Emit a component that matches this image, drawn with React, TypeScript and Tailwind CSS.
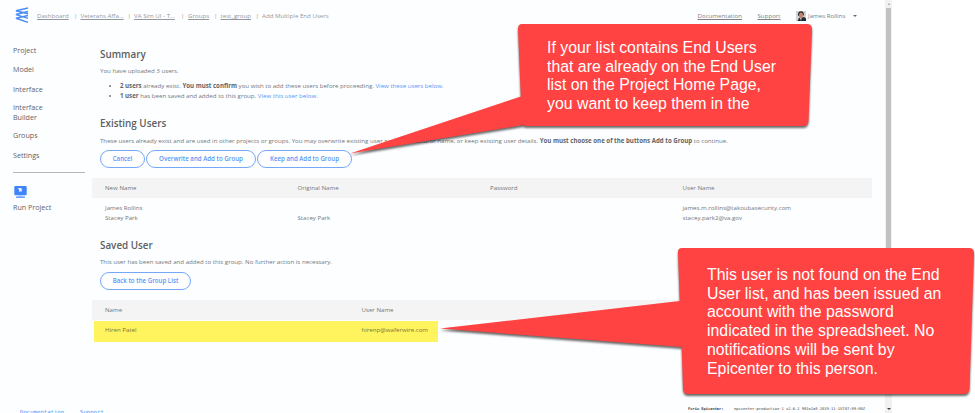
import React from "react";

const crumbs = [
  { label: "Dashboard", width: "w-[37px]", bar: "w-[6.5px]" },
  { label: "Veterans Affa...", width: "w-[47px]", bar: "w-[6.5px]" },
  { label: "VA Sim UI - T...", width: "w-[47px]", bar: "w-[7px]" },
  { label: "Groups", width: "w-[26px]", bar: "w-[6.5px]" },
  { label: "test_group", width: "w-[35px]", bar: "w-[6.5px]" },
];

function Logo() {
  return (
    <svg className="h-[17px] w-[14px] shrink-0" viewBox="0 0 14 17" fill="none" stroke="#4a8cfa" strokeWidth="1.5" strokeLinejoin="bevel">
      <path d="M13 1 1 3.7 13 6.8M13 4.6 1 7.6l12 3.8M13 8.5 1 11.2l12 4.2" />
    </svg>
  );
}

function Avatar() {
  return (
    <svg className="h-[10px] w-[10px] shrink-0" viewBox="0 0 10 10">
      <rect width="10" height="10" fill="#cfd3d6" />
      <path d="M1.5 10 3 7l5-1 2 1.5V10z" fill="#202936" />
      <path d="M2 3.2Q2.2.2 5 .2t2.8 3L7.2 5H2.4z" fill="#302522" />
      <ellipse cx="5" cy="4.5" rx="2" ry="2.9" fill="#bd8670" />
      <path d="m4.2 7 1.2.3L5 10z" fill="#f5f5f5" />
    </svg>
  );
}

function RunIcon() {
  return (
    <svg className="block h-[12px] w-[13px]" viewBox="0 0 13 12">
      <rect x="0.3" y="0" width="12.4" height="9.2" rx="1" fill="#3f85fa" />
      <rect x="4.3" y="9" width="4.4" height="1.6" fill="#b6d0fd" />
      <rect x="2" y="10.4" width="9" height="1.3" rx="0.4" fill="#3f85fa" />
      <path d="m3.7 2.3 4-.1L7.6 6 6.5 5l-.8 1-.9-1 .8-.8z" fill="#fff" />
    </svg>
  );
}

function PillButton({ children, className }: { children: React.ReactNode; className: string }) {
  return (
    <button className={`flex h-[18px] items-center justify-center rounded-full border border-[#76a8f8] bg-white text-[6.15px] font-semibold text-[#5a94f8] ${className}`}>
      {children}
    </button>
  );
}

function Header() {
  return (
    <header className="flex h-[38px] shrink-0 items-start pt-[7px] pl-[15px] text-[6.15px] leading-[10px] text-[#94979b]">
      <Logo />
      <nav className="ml-[8px] flex items-center pt-[4px]">
        {crumbs.map((c) => (
          <React.Fragment key={c.label}>
            <a className={`${c.width} underline`}>{c.label}</a>
            <span className={c.bar}>|</span>
          </React.Fragment>
        ))}
        <span>Add Multiple End Users</span>
      </nav>
      <div className="ml-auto flex items-center pt-[4px] pr-[28px] text-[#7d8084]">
        <a className="w-[60px] underline">Documentation</a>
        <a className="w-[38.5px] underline">Support</a>
        <Avatar />
        <span className="ml-[2px] w-[45px]">James Rollins</span>
        <span className="border-x-[2px] border-t-[2.5px] border-x-transparent border-t-[#666]" />
      </div>
    </header>
  );
}

function Sidebar() {
  return (
    <aside className="w-[92px] shrink-0 pl-[13px] pt-[7px] text-[7.15px] leading-[10px] text-[#5f6266]">
      <div className="h-[19px]">Project</div>
      <div className="h-[19.5px]">Model</div>
      <div className="h-[18.5px]">Interface</div>
      <div className="h-[28px]">Interface<br />Builder</div>
      <div className="h-[20px]">Groups</div>
      <div className="h-[22px]">Settings</div>
      <hr className="w-[72px] border-t border-[#b4b7bb]" />
      <div className="mt-[13px] pl-px"><RunIcon /></div>
      <div className="mt-[4px]">Run Project</div>
    </aside>
  );
}

function Main() {
  return (
    <main className="w-[780px] text-[6.14px] leading-[10px] text-[#74777b]">
      <div className="pl-[8px] pt-[9px]">
        <h2 className="h-[19px] text-[9.85px] leading-[14px] font-semibold text-[#5b5e62]">Summary</h2>
        <p>You have uploaded 3 users.</p>
        <ul className="mt-[5px] list-disc pl-[20px] marker:text-[7px]">
          <li><b className="text-[#606367]">2 users</b> already exist. <b className="text-[#606367]">You must confirm</b> you wish to add these users before proceeding. <a className="text-[#5a94f8]">View these users below.</a></li>
          <li><b className="text-[#606367]">1 user</b> has been saved and added to this group. <a className="text-[#5a94f8]">View this user below.</a></li>
        </ul>
        <h2 className="mt-[15px] h-[20px] text-[9.85px] leading-[14px] font-semibold text-[#5b5e62]">Existing Users</h2>
        <p className="whitespace-nowrap">These users already exist and are used in other projects or groups. You may overwrite existing user passwords and/or name, or keep existing user details. <b className="text-[#606367]">You must choose one of the buttons Add to Group</b> to continue.</p>
        <div className="mt-[4px] flex gap-[1px]">
          <PillButton className="w-[45px]">Cancel</PillButton>
          <PillButton className="w-[110px]">Overwrite and Add to Group</PillButton>
          <PillButton className="w-[95px]">Keep and Add to Group</PillButton>
        </div>
      </div>
      <div className="mt-[9.5px] grid h-[20px] grid-cols-[192.5px_192.5px_192.5px_1fr] items-center bg-[#f4f4f4] pl-[13px]">
        <span>New Name</span><span>Original Name</span><span>Password</span><span>User Name</span>
      </div>
      <div className="mt-[5px] grid grid-cols-[192.5px_192.5px_192.5px_1fr] pl-[13px]">
        <span>James Rollins</span><span /><span /><span>james.m.rollins@takoubasecurity.com</span>
        <span>Stacey Park</span><span>Stacey Park</span><span /><span>stacey.park2@va.gov</span>
      </div>
      <div className="pl-[8px] pt-[15px]">
        <h2 className="h-[19px] text-[9.85px] leading-[14px] font-semibold text-[#5b5e62]">Saved User</h2>
        <p>This user has been saved and added to this group. No further action is necessary.</p>
        <div className="mt-[5px] flex"><PillButton className="w-[91px]">Back to the Group List</PillButton></div>
      </div>
      <div className="mt-[10px] grid h-[20px] grid-cols-[256.5px_256.5px_1fr] items-center bg-[#f4f4f4] pl-[13px]">
        <span>Name</span><span>User Name</span><span>Password</span>
      </div>
      <div className="mt-px ml-[2px] grid h-[21px] w-[344px] grid-cols-[256.5px_1fr] bg-[#fff45d] pt-[4px] pl-[11px] text-[#77743a]">
        <span>Hiren Patel</span><span>hirenp@waferwire.com</span>
      </div>
    </main>
  );
}

function Scrollbar() {
  return (
    <div className="flex h-full w-[7px] shrink-0 flex-col items-center bg-[#f1f1f1]">
      <span className="mt-[3px] mb-[3px] border-x-[1.5px] border-b-2 border-x-transparent border-b-[#999]" />
      <div className="h-[320px] w-[5px] bg-[#c1c1c1]" />
      <span className="mt-auto mb-[3px] border-x-2 border-t-2 border-x-transparent border-t-[#444]" />
    </div>
  );
}

function Callouts() {
  return (
    <div className="absolute inset-0 font-['Liberation_Sans',Arial,sans-serif] text-[15.85px] leading-[18.7px] text-white">
      <svg className="absolute inset-0 h-[413px] w-[975px] drop-shadow-[0_2px_1px_rgba(0,0,0,0.6)]" viewBox="0 0 975 413" fill="#ff4242">
        <path d="M522 24H807Q812 24 812 29L808.500 121Q808 126 803 126H528Q524 126 523.500 125L350 153.500 520.800 96.500 518 29Q518 24 522 24Z" />
        <path d="M682 248H969Q974 248 974 253L969.500 389Q969 394 964 394H688Q683.500 394 683 389L681.700 347 440 328.500 679.700 301 678 252Q678 248 682 248Z" />
      </svg>
      <p className="absolute top-[39px] left-[547px] whitespace-nowrap">
        If your list contains End Users<br />that are already on the End User<br />list on the Project Home Page,<br />you want to keep them in the
      </p>
      <p className="absolute top-[266px] left-[707px] whitespace-nowrap">
        This user is not found on the End<br />User list, and has been issued an<br />account with the password<br />indicated in the spreadsheet. No<br />notifications will be sent by<br />Epicenter to this person.
      </p>
    </div>
  );
}

export default function App() {
  return (
    <div className="relative flex h-[413px] w-[975px] overflow-hidden bg-white font-['Open_Sans','Noto_Sans',sans-serif]">
      <div className="flex w-[885px] shrink-0 flex-col bg-[#fdfeff]">
        <Header />
        <div className="flex h-[367px] shrink-0">
          <Sidebar />
          <Main />
        </div>
        <footer className="flex h-[8px] shrink-0 items-start pl-[20px] font-['DejaVu_Sans_Mono',monospace] leading-[8px]">
          <span className="mt-[3px] w-[60px] text-[5.65px] text-[#4a89f8]">Documentation</span>
          <span className="mt-[3px] text-[5.65px] text-[#4a89f8]">Support</span>
          <span className="ml-auto w-[46px] text-[3.7px] font-bold text-[#444]">Forio Epicenter:</span>
          <span className="w-[151px] text-[3.75px] text-[#444]">epicenter-production-1 v2.6.2 981e2a9 2019-11-15T07:09:00Z</span>
        </footer>
      </div>
      <Scrollbar />
      <Callouts />
    </div>
  );
}
